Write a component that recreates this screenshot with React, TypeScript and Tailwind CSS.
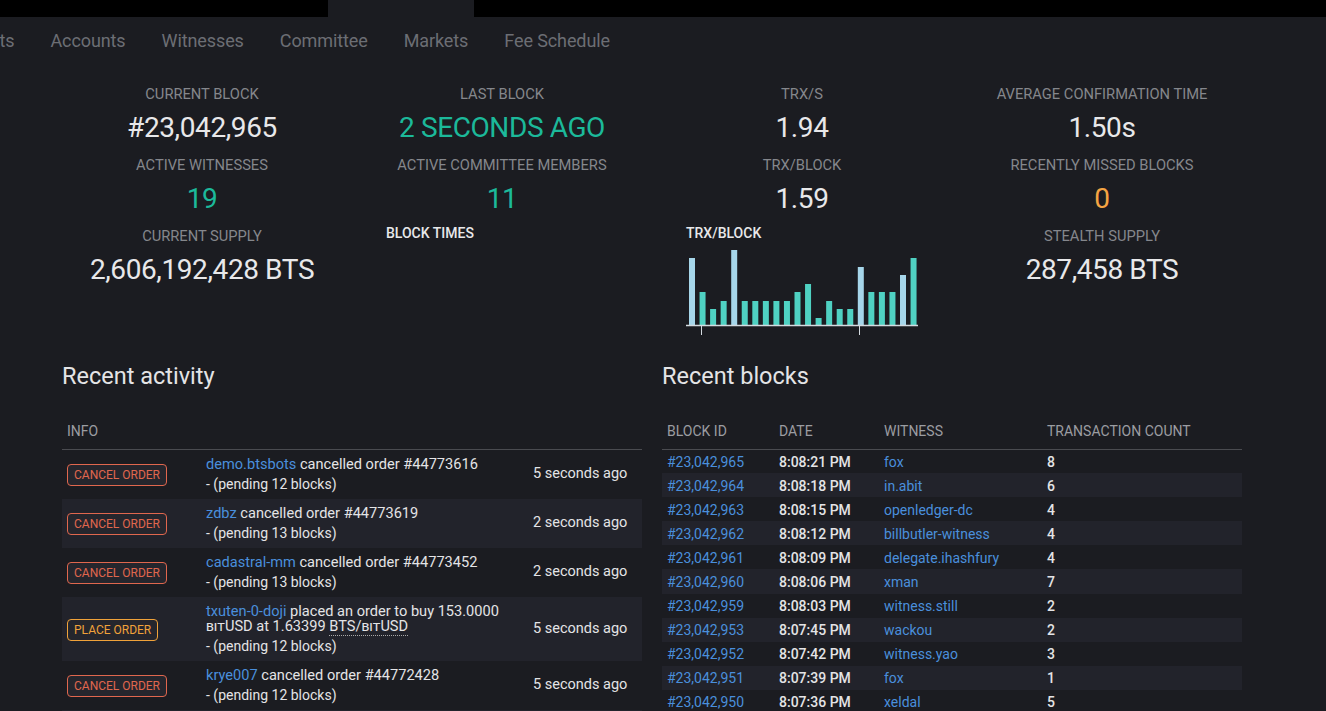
import React from 'react';

const font = "font-['Roboto','Liberation_Sans',sans-serif]";

const tabs = ['Assets', 'Accounts', 'Witnesses', 'Committee', 'Markets', 'Fee Schedule'];

type Stat = { label: string; value: string; color?: string };

const columns: { stats: Stat[]; chart?: string }[] = [
  {
    stats: [
      { label: 'Current block', value: '#23,042,965' },
      { label: 'Active witnesses', value: '19', color: 'text-[#1cb99a]' },
      { label: 'Current supply', value: '2,606,192,428 BTS' },
    ],
  },
  {
    stats: [
      { label: 'Last block', value: '2 SECONDS AGO', color: 'text-[#1cb99a]' },
      { label: 'Active committee members', value: '11', color: 'text-[#1cb99a]' },
    ],
    chart: 'BLOCK TIMES',
  },
  {
    stats: [
      { label: 'TRX/S', value: '1.94' },
      { label: 'TRX/Block', value: '1.59' },
    ],
    chart: 'TRX/BLOCK',
  },
  {
    stats: [
      { label: 'Average confirmation time', value: '1.50s' },
      { label: 'Recently missed blocks', value: '0', color: 'text-[#f5a443]' },
      { label: 'Stealth supply', value: '287,458 BTS' },
    ],
  },
];

const bars = [67, 33, 16, 24, 75, 24, 24, 24, 24, 24, 33, 41, 7, 24, 16, 16, 58, 33, 33, 33, 50, 67];
const lightBars = [0, 4, 16, 20];

type Activity = {
  kind: 'cancel' | 'place';
  account: string;
  text: React.ReactNode;
  pending: number;
  time: string;
};

const activity: Activity[] = [
  { kind: 'cancel', account: 'demo.btsbots', text: ' cancelled order #44773616', pending: 12, time: '5 seconds ago' },
  { kind: 'cancel', account: 'zdbz', text: ' cancelled order #44773619', pending: 13, time: '2 seconds ago' },
  { kind: 'cancel', account: 'cadastral-mm', text: ' cancelled order #44773452', pending: 13, time: '2 seconds ago' },
  {
    kind: 'place',
    account: 'txuten-0-doji',
    text: (
      <>
        {' placed an order to buy 153.0000 '}
        <span className="[font-variant:small-caps]">bit</span>USD at 1.63399{' '}
        <span className="border-b border-dotted border-[#aaaaaa]">
          BTS/<span className="[font-variant:small-caps]">bit</span>USD
        </span>
      </>
    ),
    pending: 12,
    time: '5 seconds ago',
  },
  { kind: 'cancel', account: 'krye007', text: ' cancelled order #44772428', pending: 12, time: '5 seconds ago' },
  { kind: 'cancel', account: 'alpha-go', text: ' cancelled order #44772431', pending: 12, time: '6 seconds ago' },
];

const blocks = [
  ['#23,042,965', '8:08:21 PM', 'fox', '8'],
  ['#23,042,964', '8:08:18 PM', 'in.abit', '6'],
  ['#23,042,963', '8:08:15 PM', 'openledger-dc', '4'],
  ['#23,042,962', '8:08:12 PM', 'billbutler-witness', '4'],
  ['#23,042,961', '8:08:09 PM', 'delegate.ihashfury', '4'],
  ['#23,042,960', '8:08:06 PM', 'xman', '7'],
  ['#23,042,959', '8:08:03 PM', 'witness.still', '2'],
  ['#23,042,953', '8:07:45 PM', 'wackou', '2'],
  ['#23,042,952', '8:07:42 PM', 'witness.yao', '3'],
  ['#23,042,951', '8:07:39 PM', 'fox', '1'],
  ['#23,042,950', '8:07:36 PM', 'xeldal', '5'],
];

function StatBlock({ stat }: { stat: Stat }) {
  return (
    <div className="text-center pb-[10px]">
      <div className="text-[14.7px] leading-[17px] uppercase text-[#85878c]">{stat.label}</div>
      <div className={`mt-[6px] text-[28px] leading-[38px] tracking-[-0.4px] ${stat.color ?? 'text-[#e8e8ea]'}`}>
        {stat.value}
      </div>
    </div>
  );
}

function TrxChart() {
  return (
    <svg width="232" height="88" viewBox="0 0 232 88">
      {bars.map((h, i) => (
        <rect
          key={i}
          x={3 + i * 10.55}
          y={77 - h}
          width="6"
          height={h}
          fill={lightBars.includes(i) ? '#a6d6ea' : '#4fd1c2'}
        />
      ))}
      <line x1="0" y1="77.5" x2="232" y2="77.5" stroke="#d4dae0" strokeWidth="1.5" />
      <line x1="15.5" y1="77" x2="15.5" y2="87" stroke="#d4dae0" strokeWidth="1" />
      <line x1="173.5" y1="77" x2="173.5" y2="87" stroke="#d4dae0" strokeWidth="1" />
    </svg>
  );
}

function Badge({ kind }: { kind: 'cancel' | 'place' }) {
  const cls =
    kind === 'cancel'
      ? 'border-[#e0674e] text-[#e0674e]'
      : 'border-[#f0a23a] text-[#f0a23a]';
  return (
    <span className={`inline-block rounded-[4px] border bg-[#25262d] px-[6px] text-[12px] leading-[20px] whitespace-nowrap ${cls}`}>
      {kind === 'cancel' ? 'CANCEL ORDER' : 'PLACE ORDER'}
    </span>
  );
}

export default function App() {
  return (
    <div className={`h-[711px] overflow-hidden bg-[#1b1c21] ${font}`}>
      {/* top strip with the active tab cut-out */}
      <div className="flex h-[17px]">
        <div className="w-[328px] bg-black" />
        <div className="w-[146px] bg-[#1b1c21]" />
        <div className="flex-1 bg-black" />
      </div>

      <nav className="flex h-[47px] items-center gap-[36px] whitespace-nowrap text-[18px] tracking-[-0.1px] text-[#6c6e74]">
        {tabs.map((t, i) => (
          <span key={t} className={i === 0 ? 'ml-[-40px]' : ''}>
            {t}
          </span>
        ))}
      </nav>

      <main className="ml-[52px] w-[1200px]">
        <div className="grid grid-cols-4 pt-[22px]">
          {columns.map((col, ci) => (
            <div key={ci}>
              {col.stats.map((s) => (
                <StatBlock key={s.label} stat={s} />
              ))}
              {col.chart && (
                <div className="mt-[-3px] pl-[34px]">
                  <div className="text-[14px] leading-[16px] font-medium text-[#e8e8ea]">{col.chart}</div>
                  <div className="mt-[7px] h-[88px]">{col.chart === 'TRX/BLOCK' && <TrxChart />}</div>
                </div>
              )}
            </div>
          ))}
        </div>

        <div className="mt-[26px] grid grid-cols-2">
          <section className="px-[10px]">
            <h2 className="text-[23.5px] leading-[28px] text-[#e4e4e6]">Recent activity</h2>
            <table className="mt-[21px] w-full table-fixed border-collapse">
              <colgroup>
                <col className="w-[139px]" />
                <col className="w-[327px]" />
                <col />
              </colgroup>
              <thead>
                <tr className="border-b border-[#4a4b50]">
                  <th className="h-[38px] pt-[4px] pl-[5px] text-left text-[14px] font-normal text-[#9b9da2]" colSpan={3}>
                    INFO
                  </th>
                </tr>
              </thead>
              <tbody>
                {activity.map((a, i) => (
                  <tr key={i} className={i % 2 === 1 ? 'bg-[#22232b]' : ''}>
                    <td className="pl-[5px] align-middle">
                      <Badge kind={a.kind} />
                    </td>
                    <td className="py-[7px] pl-[5px] align-middle text-[#e4e4e6]">
                      <div className="text-[14.6px] leading-[15px]">
                        <span className="text-[#4a8fdc]">{a.account}</span>
                        {a.text}
                      </div>
                      <div className="mt-[4px] text-[14px] leading-[16px]">- (pending {a.pending} blocks)</div>
                    </td>
                    <td className="pl-[5px] align-middle text-[14.5px] text-[#e4e4e6]">{a.time}</td>
                  </tr>
                ))}
              </tbody>
            </table>
          </section>

          <section className="px-[10px]">
            <h2 className="text-[23.5px] leading-[28px] text-[#e4e4e6]">Recent blocks</h2>
            <table className="mt-[21px] w-full table-fixed border-collapse text-[14px]">
              <colgroup>
                <col className="w-[112px]" />
                <col className="w-[105px]" />
                <col className="w-[163px]" />
                <col />
              </colgroup>
              <thead>
                <tr className="border-b border-[#4a4b50] text-left text-[#9b9da2]">
                  <th className="h-[38px] pt-[4px] pl-[5px] font-normal">BLOCK ID</th>
                  <th className="pt-[4px] pl-[5px] font-normal">DATE</th>
                  <th className="pt-[4px] pl-[5px] font-normal">WITNESS</th>
                  <th className="pt-[4px] pl-[5px] font-normal">TRANSACTION COUNT</th>
                </tr>
              </thead>
              <tbody>
                {blocks.map((b, i) => (
                  <tr key={b[0]} className={`h-[24.1px] ${i % 2 === 1 ? 'bg-[#22232b]' : ''}`}>
                    <td className="pl-[5px] pt-[2px] text-[#4a8fdc]">{b[0]}</td>
                    <td className="pl-[5px] pt-[2px] font-medium text-[#e4e4e6]">{b[1]}</td>
                    <td className="pl-[5px] pt-[2px] text-[#4a8fdc]">{b[2]}</td>
                    <td className="pl-[5px] pt-[2px] font-medium text-[#e4e4e6]">{b[3]}</td>
                  </tr>
                ))}
              </tbody>
            </table>
          </section>
        </div>
      </main>
    </div>
  );
}
